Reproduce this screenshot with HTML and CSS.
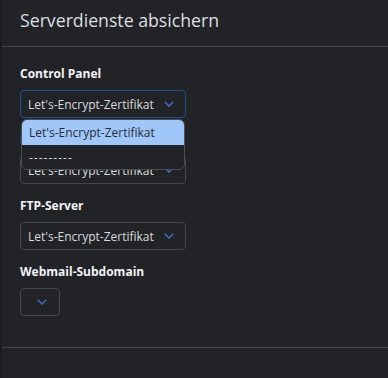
FILE: index.html
```html
<!DOCTYPE html>
<html lang="de">
<head>
<meta charset="utf-8">
<title>Serverdienste absichern</title>
<link rel="stylesheet" href="styles.css">
</head>
<body>
<div class="modal">
  <div class="modal-header">
    <h5 class="modal-title">Serverdienste absichern</h5>
  </div>
  <div class="modal-body">
    <div class="group">
      <div class="label">Control Panel</div>
      <div class="select focused">
        <span class="value">Let's-Encrypt-Zertifikat</span>
        <svg class="chev" width="10" height="6" viewBox="0 0 10 6"><path d="M0.7 0.7 L5 5 L9.3 0.7" fill="none" stroke="#3a6fc0" stroke-width="1.5"/></svg>
      </div>
      <div class="popup">
        <div class="opt active">Let's-Encrypt-Zertifikat</div>
        <div class="opt dashes">---------</div>
      </div>
    </div>
    <div class="group">
      <div class="label">Mailserver</div>
      <div class="select">
        <span class="value">Let's-Encrypt-Zertifikat</span>
        <svg class="chev" width="10" height="6" viewBox="0 0 10 6"><path d="M0.7 0.7 L5 5 L9.3 0.7" fill="none" stroke="#3a6fc0" stroke-width="1.5"/></svg>
      </div>
    </div>
    <div class="group">
      <div class="label">FTP-Server</div>
      <div class="select">
        <span class="value">Let's-Encrypt-Zertifikat</span>
        <svg class="chev" width="10" height="6" viewBox="0 0 10 6"><path d="M0.7 0.7 L5 5 L9.3 0.7" fill="none" stroke="#3a6fc0" stroke-width="1.5"/></svg>
      </div>
    </div>
    <div class="group">
      <div class="label">Webmail-Subdomain</div>
      <div class="select empty">
        <svg class="chev" width="10" height="6" viewBox="0 0 10 6"><path d="M0.7 0.7 L5 5 L9.3 0.7" fill="none" stroke="#3a6fc0" stroke-width="1.5"/></svg>
      </div>
    </div>
  </div>
  <div class="modal-footer"></div>
</div>
</body>
</html>
```
FILE: styles.css
```css
html, body {
  margin: 0;
  padding: 0;
  background: #1b1d20;
  height: 100%;
}
body {
  font-family: "Open Sans", "Noto Sans", sans-serif;
  color: #dee2e6;
  overflow: hidden;
}
.modal {
  margin-left: 2px;
  background: #212326;
  height: 378px;
  display: flex;
  flex-direction: column;
}
.modal-header {
  height: 46px;
  border-bottom: 1px solid #44474b;
  display: flex;
  align-items: center;
  padding: 0 18px;
}
.modal-title {
  margin: 0;
  font-size: 17.7px;
  font-weight: 400;
  color: #dcdfe2;
  line-height: 24px;
  position: relative;
  top: -3px;
}
.modal-body {
  box-sizing: border-box;
  padding: 18px 18px 0;
  height: 301px;
  border-bottom: 1px solid #44474b;
  position: relative;
}
.group {
  margin-bottom: 13px;
  position: relative;
}
.label {
  font-weight: 700;
  font-size: 12px;
  line-height: 18px;
  color: #f1f3f5;
  margin-bottom: 7px;
}
.select {
  box-sizing: border-box;
  width: 166px;
  height: 28px;
  border: 1px solid #44474b;
  border-radius: 4px;
  display: flex;
  align-items: center;
  justify-content: space-between;
  padding: 0 11px 0 7px;
  font-size: 12px;
  color: #d8dbde;
}
.select.focused {
  border-color: #254f8c;
}
.select.empty {
  width: 40px;
  justify-content: flex-end;
  padding-right: 12px;
}
.chev {
  display: block;
}
.popup {
  position: absolute;
  left: 1px;
  top: 54px;
  width: 164px;
  box-sizing: border-box;
  height: 51px;
  background: #212326;
  border: 1px solid #4a4d51;
  border-radius: 6px;
  overflow: hidden;
  z-index: 5;
  font-size: 12px;
}
.opt {
  height: 25px;
  line-height: 25px;
  padding-left: 7px;
  color: #d3d6d9;
}
.opt.dashes {
  letter-spacing: 1px;
}
.opt.active {
  background: #9fc7fa;
  color: #2a2d31;
}
.modal-footer {
  flex: 1;
}
```
